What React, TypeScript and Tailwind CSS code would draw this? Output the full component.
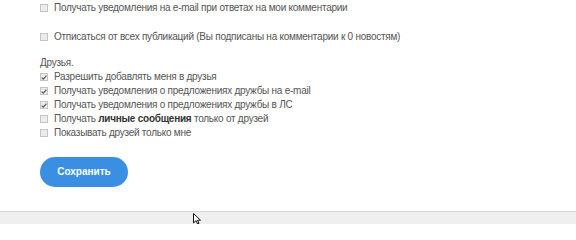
import * as React from "react";

type Option = {
  id: string;
  checked: boolean;
  label: React.ReactNode;
};

const friends: Option[] = [
  { id: "allow-add", checked: true, label: "Разрешить добавлять меня в друзья" },
  { id: "notify-email", checked: true, label: "Получать уведомления о предложениях дружбы на e-mail" },
  { id: "notify-pm", checked: true, label: "Получать уведомления о предложениях дружбы в ЛС" },
  {
    id: "pm-friends",
    checked: false,
    label: (
      <>
        Получать <b className="font-bold text-[#333]">личные сообщения</b> только от друзей
      </>
    ),
  },
  { id: "show-friends", checked: false, label: "Показывать друзей только мне" },
];

function Check({ checked, label }: { checked: boolean; label: React.ReactNode }) {
  return (
    <label className="flex h-[14px] items-center gap-[6px]">
      <span className="flex size-[8px] shrink-0 items-center justify-center border border-[#c4c4c4] bg-[#ececec]">
        {checked ? (
          <svg viewBox="0 0 8 8" className="size-[9px]" aria-hidden="true">
            <path d="M1 4.2 L3.1 6.2 L7.2 1.4" fill="none" stroke="#555" strokeWidth="1.5" />
          </svg>
        ) : null}
      </span>
      <span>{label}</span>
    </label>
  );
}

export default function App() {
  return (
    <div
      className="relative flex h-[224px] w-[576px] flex-col overflow-hidden bg-white text-[10px] leading-[14px] tracking-[-0.25px] text-[#555]"
      style={{ fontFamily: '"Liberation Sans", Arial, sans-serif' }}
    >
      <div className="flex flex-1 flex-col pl-[40px] pt-[1px]">
        <Check checked={false} label="Получать уведомления на e-mail при ответах на мои комментарии" />
        <div className="mt-[15px]">
          <Check
            checked={false}
            label="Отписаться от всех публикаций (Вы подписаны на комментарии к 0 новостям)"
          />
        </div>

        <p className="mt-[12px] h-[14px]">Друзья.</p>
        <div className="flex flex-col">
          {friends.map((o) => (
            <Check key={o.id} checked={o.checked} label={o.label} />
          ))}
        </div>

        <div className="mt-[17px]">
          <button
            type="button"
            className="h-[30px] w-[88px] rounded-full bg-[#3a8fe3] text-[10px] font-bold tracking-normal text-white"
          >
            Сохранить
          </button>
        </div>
      </div>

      <div className="h-[13px] border-t border-[#d6d6d6] bg-[#efefef]" />

      {/* mouse cursor */}
      <svg
        viewBox="0 0 8 12"
        className="absolute left-[193px] top-[213px] h-[12px] w-[8px]"
        aria-hidden="true"
      >
        <path d="M0.5 0.5 L0.5 10 L3 7.6 L4.6 11 L6 10.4 L4.5 7.2 L7.5 7.2 Z" fill="#fff" stroke="#111" strokeWidth="1" />
      </svg>
    </div>
  );
}
